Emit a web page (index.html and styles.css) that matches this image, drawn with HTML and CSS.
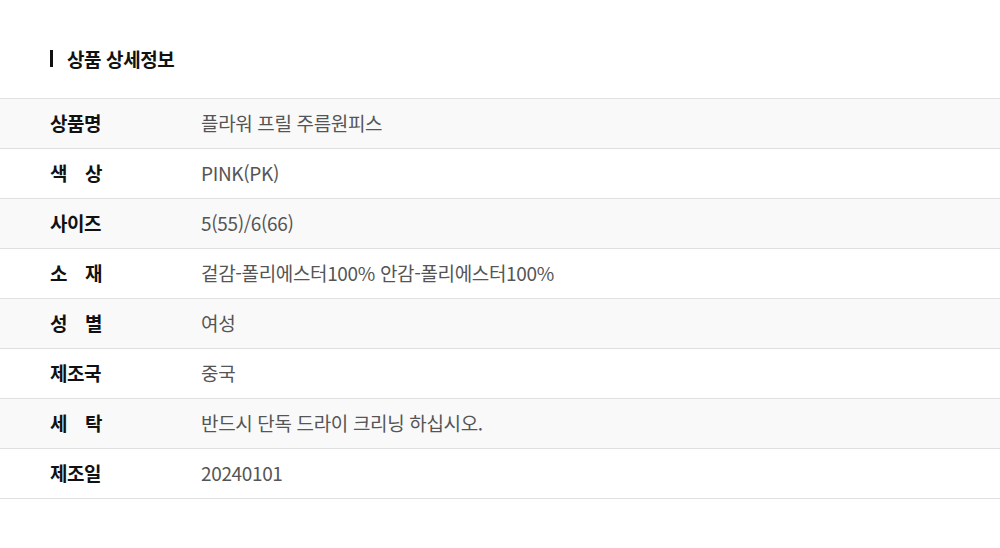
FILE: index.html
```html
<!DOCTYPE html>
<html lang="ko">
<head>
<meta charset="utf-8">
<link rel="stylesheet" href="styles.css">
</head>
<body>
<div class="page">
  <h2 class="title"><span class="bar"></span>상품 상세정보</h2>
  <div class="table">
    <div class="row alt"><div class="label"><span>상품명</span></div><div class="value">플라워 프릴 주름원피스</div></div>
    <div class="row"><div class="label"><span class="just">색 상</span></div><div class="value">PINK(PK)</div></div>
    <div class="row alt"><div class="label"><span>사이즈</span></div><div class="value">5(55)/6(66)</div></div>
    <div class="row"><div class="label"><span class="just">소 재</span></div><div class="value">겉감-폴리에스터100% 안감-폴리에스터100%</div></div>
    <div class="row alt"><div class="label"><span class="just">성 별</span></div><div class="value">여성</div></div>
    <div class="row"><div class="label"><span>제조국</span></div><div class="value">중국</div></div>
    <div class="row alt"><div class="label"><span class="just">세 탁</span></div><div class="value">반드시 단독 드라이 크리닝 하십시오.</div></div>
    <div class="row"><div class="label"><span>제조일</span></div><div class="value">20240101</div></div>
  </div>
</div>
</body>
</html>
```
FILE: styles.css
```css
* { box-sizing: border-box; }
html, body { margin: 0; padding: 0; background: #fff; }
body {
  font-family: "Noto Sans CJK KR", "Noto Sans", sans-serif;
  color: #111;
}
.page { padding-top: 46px; }
.title {
  margin: 0 0 28px 50px;
  height: 24px;
  display: flex;
  align-items: center;
  font-size: 19px;
  font-weight: 700;
  letter-spacing: -0.4px;
  color: #111;
}
.bar {
  width: 3px;
  height: 17px;
  background: #111;
  margin-right: 14px;
}
.table { border-top: 1px solid #e0e0e0; }
.row {
  display: flex;
  align-items: center;
  height: 50px;
  padding-bottom: 2px;
  border-bottom: 1px solid #e0e0e0;
}
.row.alt { background: #f9f9f9; }
.label {
  width: 201px;
  padding-left: 50px;
  font-size: 19px;
  font-weight: 700;
  color: #111;
  letter-spacing: -0.5px;
}
.label .just {
  display: inline-block;
  width: 52px;
  text-align: justify;
  text-align-last: justify;
}
.value {
  font-size: 19px;
  color: #555;
  letter-spacing: -0.35px;
}
```
